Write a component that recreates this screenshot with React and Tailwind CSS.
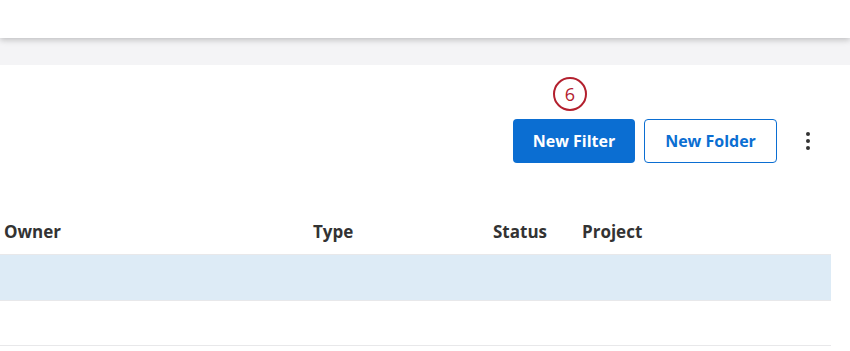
export default function App() {
  const font = { fontFamily: '"Open Sans", "Liberation Sans", sans-serif' };
  return (
    <div className="w-[850px] h-[351px] overflow-hidden bg-white" style={font}>
      <div className="relative z-10 h-[38px] bg-white shadow-[0_2px_6px_rgba(0,0,0,0.22)]" />
      <div className="h-[27px] bg-[#f4f4f6]" />
      <div className="bg-white">
        <div className="flex items-center justify-end pt-[54px] pr-[22px]">
          <div className="relative">
            <div className="absolute left-[40px] top-[-42px] flex h-[34px] w-[34px] items-center justify-center rounded-full border-2 border-[#b3202e] text-[18px] leading-none text-[#b3202e]">
              6
            </div>
            <button className="h-[44px] w-[122px] rounded-[4px] bg-[#0b6ed2] text-[16px] font-bold text-white">
              New Filter
            </button>
          </div>
          <button className="ml-[9px] h-[44px] w-[133px] rounded-[4px] border border-[#0b6ed2] bg-white text-[16px] font-bold text-[#0b6ed2]">
            New Folder
          </button>
          <button className="ml-[11px] flex h-[44px] w-[40px] flex-col items-center justify-center gap-[3px]">
            <span className="h-[4px] w-[4px] rounded-full bg-[#333]" />
            <span className="h-[4px] w-[4px] rounded-full bg-[#333]" />
            <span className="h-[4px] w-[4px] rounded-full bg-[#333]" />
          </button>
        </div>
        <div className="mt-[47px] w-[831px]">
          <div className="grid h-[44px] grid-cols-[309px_180px_89px_1fr] items-center pl-[4px] text-[17px] font-bold text-[#333]">
            <div>Owner</div>
            <div>Type</div>
            <div>Status</div>
            <div>Project</div>
          </div>
          <div className="h-[47px] border-y border-[#e8e8ea] bg-[#ddebf6]" />
          <div className="h-[45px] border-b border-[#e8e8ea] bg-white" />
        </div>
      </div>
    </div>
  );
}
